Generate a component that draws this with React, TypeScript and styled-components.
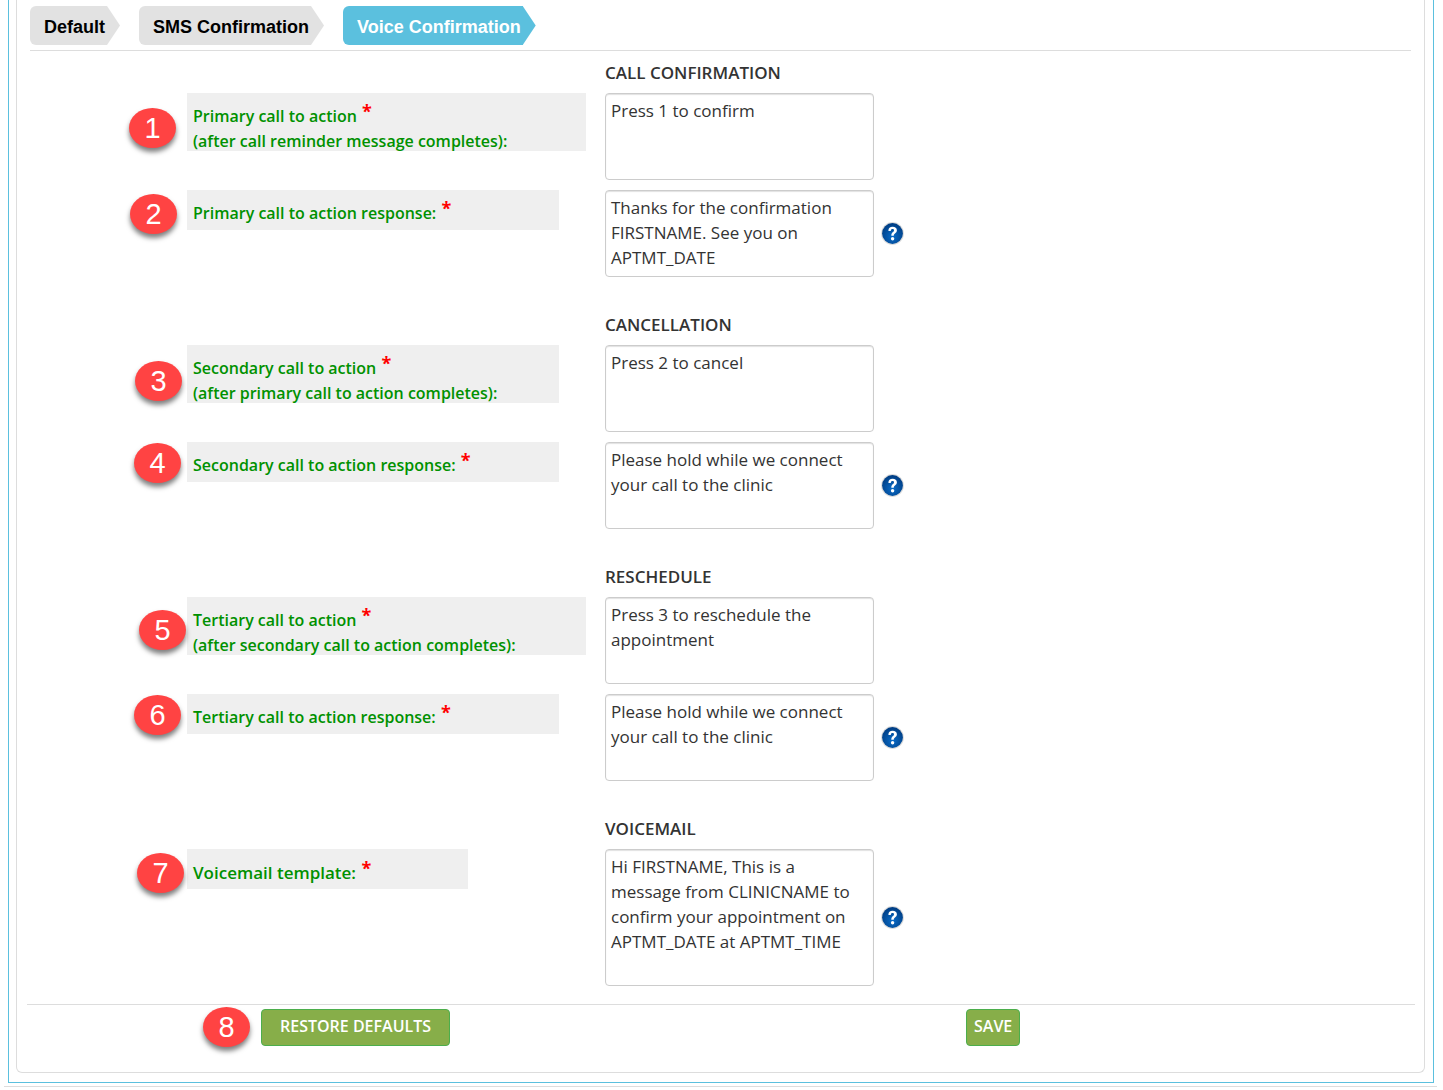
import React, { useId } from "react";
import styled, { createGlobalStyle } from "styled-components";

const GlobalStyle = createGlobalStyle`
  *, *::before, *::after { box-sizing: border-box; }
  body {
    margin: 0;
    background: #fff;
    color: #333;
    font-family: "Open Sans", "Noto Sans", sans-serif;
    font-size: 17px;
    line-height: 25px;
  }
`;

const Page = styled.div`
  padding: 0 6px 0 4px;
`;

const Frame = styled.div`
  margin: 0 3px 0 4px;
  padding: 0 8px 9px 7px;
  border: 1px solid #5bc0de;
  border-top: 0;
`;

const Panel = styled.main`
  padding: 6px 9px 26px 10px;
  border: 1px solid #ddd;
  border-top: 0;
  border-radius: 0 0 6px 6px;
`;

const Tabs = styled.nav`
  display: flex;
  gap: 32px;
  margin: 0 4px 0 3px;
  padding-bottom: 5px;
  border-bottom: 1px solid #ddd;
`;

const Tab = styled.button<{ $active?: boolean }>`
  position: relative;
  height: 39px;
  padding: 2px 2px 0 14px;
  border: 0;
  border-radius: 6px 0 0 6px;
  background: ${(p) => (p.$active ? "#5bc0de" : "#e2e2e2")};
  color: ${(p) => (p.$active ? "#fff" : "#000")};
  font: bold 18px/24px "Liberation Sans", Arial, sans-serif;
  cursor: pointer;

  &::after {
    content: "";
    position: absolute;
    top: 0;
    left: 100%;
    width: 13px;
    height: 100%;
    background: inherit;
    clip-path: polygon(0 0, 100% 50%, 0 100%);
  }
`;

const Form = styled.form`
  margin: 0;
  padding-top: 9px;
`;

const Section = styled.section`
  padding: 0 0 35px 160px;

  &:last-of-type {
    padding-bottom: 18px;
  }
`;

const Heading = styled.h2`
  margin: 0 0 8px 418px;
  font-size: 17px;
  font-weight: 600;
  line-height: 25px;
`;

const Row = styled.div`
  position: relative;
  display: grid;
  grid-template-columns: 418px 269px auto;
  justify-content: start;
  align-items: start;

  & + & {
    margin-top: 10px;
  }
`;

const Label = styled.label<{ $width: number; $tall?: boolean; $large?: boolean }>`
  width: ${(p) => p.$width}px;
  height: ${(p) => (p.$tall ? 58 : 40)}px;
  padding: 11px 6px 0;
  background: #efefef;
  color: #009100;
  font-size: ${(p) => (p.$large ? 17 : 16)}px;
  font-weight: 600;
  line-height: 25px;
  white-space: nowrap;
`;

const Required = styled.span`
  margin-left: 1px;
  color: #f00;
  font-size: 18px;
  font-weight: 700;
  line-height: 12px;
  vertical-align: 4px;
`;

const TextBox = styled.textarea<{ $tall?: boolean }>`
  display: block;
  width: 100%;
  height: ${(p) => (p.$tall ? 137 : 87)}px;
  padding: 4px 5px;
  border: 1px solid #ccc;
  border-radius: 4px;
  box-shadow: inset 0 1px 1px rgba(0, 0, 0, 0.12);
  color: #333;
  font: inherit;
  resize: none;
  overflow: hidden;
`;

const HelpButton = styled.button`
  align-self: center;
  width: 23px;
  height: 23px;
  margin-left: 7px;
  padding: 0;
  border: 0;
  background: none;
  cursor: pointer;

  svg { display: block; }
`;

const Pin = styled.span<{ $x: number; $y: number }>`
  position: absolute;
  left: ${(p) => p.$x}px;
  top: ${(p) => p.$y}px;
  width: 47px;
  height: 40px;
  border-radius: 50%;
  background: #ff4343;
  box-shadow: 0 4px 5px rgba(0, 0, 0, 0.5);
  color: #fff;
  font: 29px/40px "Liberation Sans", Arial, sans-serif;
  text-align: center;
`;

const Footer = styled.footer`
  position: relative;
  display: grid;
  grid-template-columns: 705px auto;
  justify-content: start;
  justify-items: start;
  padding: 4px 0 0 234px;
  border-top: 1px solid #ddd;
`;

const Action = styled.button<{ $wide?: boolean }>`
  height: 37px;
  padding: 0 ${(p) => (p.$wide ? 18 : 7)}px 2px;
  border: 1px solid #4cae4c;
  border-radius: 4px;
  background: #87ae49;
  color: #fff;
  font: inherit;
  font-size: 16px;
  font-weight: 600;
  cursor: pointer;
`;

const BottomRule = styled.hr`
  height: 1px;
  margin: 3px 0 0;
  border: 0;
  background: #ddd;
`;

type FieldProps = {
  pin: number;
  pinX: number;
  pinY: number;
  label: string;
  note?: string;
  width: number;
  value: string;
  help?: boolean;
  large?: boolean;
};

function Field({ pin, pinX, pinY, label, note, width, value, help, large }: FieldProps) {
  const id = useId();
  return (
    <Row>
      <Pin $x={pinX} $y={pinY}>{pin}</Pin>
      <Label htmlFor={id} $width={width} $tall={!!note} $large={large}>
        {label} <Required>*</Required>
        {note && <><br />{note}</>}
      </Label>
      <TextBox id={id} defaultValue={value} $tall={large} spellCheck={false} />
      {help && (
        <HelpButton type="button" aria-label="Help">
          <svg width="23" height="23" viewBox="0 0 23 23" aria-hidden="true">
            <defs>
              <radialGradient id={`${id}-g`} cx="50%" cy="65%" r="60%">
                <stop offset="0" stopColor="#0a6cc8" />
                <stop offset="1" stopColor="#003f86" />
              </radialGradient>
            </defs>
            <circle cx="11.5" cy="11.5" r="11.4" fill="#dcdcdc" />
            <circle cx="11.5" cy="11.5" r="10.4" fill={`url(#${id}-g)`} />
            <path
              d="M7.4 8.9C7.3 6.3 9.1 4.8 11.6 4.8c2.6 0 4.3 1.4 4.3 3.5 0 1.6-.9 2.4-1.9 3.2-.9.7-1.2 1.1-1.2 2.3h-2.5c0-2 .6-2.8 1.6-3.7.7-.6 1.1-1 1.1-1.7 0-.9-.6-1.4-1.5-1.4-1 0-1.6.6-1.7 1.9z"
              fill="#fff"
            />
            <circle cx="11.6" cy="16.8" r="1.7" fill="#fff" />
          </svg>
        </HelpButton>
      )}
    </Row>
  );
}

export default function App() {
  return (
    <Page>
      <GlobalStyle />
      <Frame>
        <Panel>
          <Tabs>
            <Tab type="button">Default</Tab>
            <Tab type="button">SMS Confirmation</Tab>
            <Tab type="button" $active>Voice Confirmation</Tab>
          </Tabs>
          <Form onSubmit={(e) => e.preventDefault()}>
            <Section>
              <Heading>CALL CONFIRMATION</Heading>
              <Field pin={1} pinX={-58} pinY={15} width={399} label="Primary call to action" note="(after call reminder message completes):" value="Press 1 to confirm" />
              <Field pin={2} pinX={-57} pinY={4} width={372} label="Primary call to action response:" value="Thanks for the confirmation FIRSTNAME. See you on APTMT_DATE" help />
            </Section>
            <Section>
              <Heading>CANCELLATION</Heading>
              <Field pin={3} pinX={-52} pinY={16} width={372} label="Secondary call to action" note="(after primary call to action completes):" value="Press 2 to cancel" />
              <Field pin={4} pinX={-53} pinY={1} width={372} label="Secondary call to action response:" value="Please hold while we connect your call to the clinic" help />
            </Section>
            <Section>
              <Heading>RESCHEDULE</Heading>
              <Field pin={5} pinX={-48} pinY={13} width={399} label="Tertiary call to action" note="(after secondary call to action completes):" value="Press 3 to reschedule the appointment" />
              <Field pin={6} pinX={-53} pinY={1} width={372} label="Tertiary call to action response:" value="Please hold while we connect your call to the clinic" help />
            </Section>
            <Section>
              <Heading>VOICEMAIL</Heading>
              <Field pin={7} pinX={-50} pinY={4} width={281} label="Voicemail template:" value="Hi FIRSTNAME, This is a message from CLINICNAME to confirm your appointment on APTMT_DATE at APTMT_TIME" help large />
            </Section>
            <Footer>
              <Pin $x={176} $y={2}>8</Pin>
              <Action type="reset" $wide>RESTORE DEFAULTS</Action>
              <Action type="submit">SAVE</Action>
            </Footer>
          </Form>
        </Panel>
      </Frame>
      <BottomRule />
    </Page>
  );
}
